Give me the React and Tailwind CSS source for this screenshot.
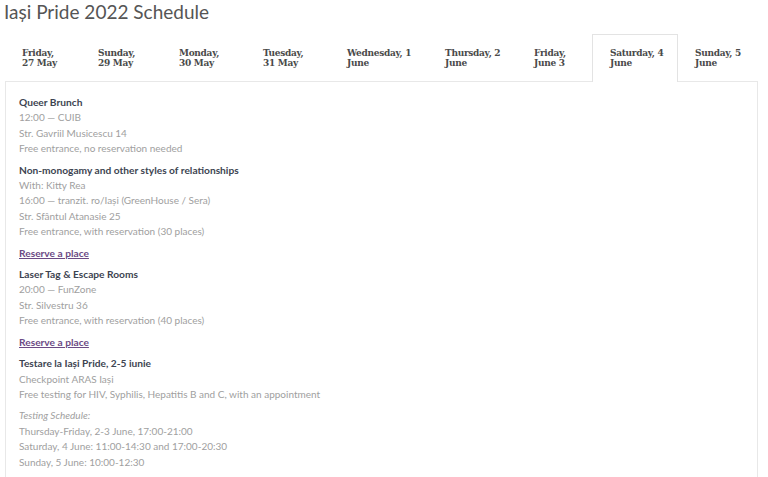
import React from 'react';

const tabs = [
    { l1: 'Friday,', l2: '27 May', w: 'w-[76px]' },
    { l1: 'Sunday,', l2: '29 May', w: 'w-[81px]' },
    { l1: 'Monday,', l2: '30 May', w: 'w-[84px]' },
    { l1: 'Tuesday,', l2: '31 May', w: 'w-[84px]' },
    { l1: 'Wednesday, 1', l2: 'June', w: 'w-[98px]' },
    { l1: 'Thursday, 2', l2: 'June', w: 'w-[89px]' },
    { l1: 'Friday,', l2: 'June 3', w: 'w-[75px]' },
    { l1: 'Saturday, 4', l2: 'June', w: 'w-[86px]', active: true },
    { l1: 'Sunday, 5', l2: 'June', w: 'w-[79px]' },
];

const Title = ({ children }) => (
    <div className="font-bold text-[#3d4451] text-[10.2px] leading-[15.4px]">{children}</div>
);

const Line = ({ children }) => (
    <div className="text-[#a0a0a0] text-[10px] leading-[15.4px]">{children}</div>
);

const Reserve = () => (
    <a href="#" className="font-bold text-[#6b4a85] underline text-[10.2px] leading-[15.4px] block">Reserve a place</a>
);

const App = () => {
    return (
        <div className="bg-white min-h-screen" style={{ fontFamily: 'Lato, "Open Sans", sans-serif' }}>
            <h1 className="pl-[4px] text-[19px] leading-[24px] text-[#555] font-normal">Iași Pride 2022 Schedule</h1>

            <div className="ml-[5px] mt-[10px] flex h-[47px] relative z-10" style={{ fontFamily: '"DejaVu Serif", serif' }}>
                {tabs.map((t) => (
                    <div
                        key={t.l1 + t.l2}
                        className={`${t.w} shrink-0 pl-[17px] flex items-center text-[9px] leading-[10px] font-bold text-[#4a4a4a] tracking-[-0.3px] ${t.active ? 'border border-b-0 border-[#e3e3e3] bg-white h-[48px] pb-[2px]' : ''}`}
                    >
                        <div>
                            <div>{t.l1}</div>
                            <div>{t.l2}</div>
                        </div>
                    </div>
                ))}
            </div>

            <div className="ml-[5px] w-[753px] border border-[#e8e8e8] px-[13px] pt-[13px] pb-4 flex flex-col gap-[6px]">
                <div>
                    <Title>Queer Brunch</Title>
                    <Line>12:00 — CUIB</Line>
                    <Line>Str. Gavriil Musicescu 14</Line>
                    <Line>Free entrance, no reservation needed</Line>
                </div>
                <div>
                    <Title>Non-monogamy and other styles of relationships</Title>
                    <Line>With: Kitty Rea</Line>
                    <Line>16:00 — tranzit. ro/Iași (GreenHouse / Sera)</Line>
                    <Line>Str. Sfântul Atanasie 25</Line>
                    <Line>Free entrance, with reservation (30 places)</Line>
                </div>
                <Reserve />
                <div>
                    <Title>Laser Tag &amp; Escape Rooms</Title>
                    <Line>20:00 — FunZone</Line>
                    <Line>Str. Silvestru 36</Line>
                    <Line>Free entrance, with reservation (40 places)</Line>
                </div>
                <Reserve />
                <div>
                    <Title>Testare la Iași Pride, 2-5 iunie</Title>
                    <Line>Checkpoint ARAS Iași</Line>
                    <Line>Free testing for HIV, Syphilis, Hepatitis B and C, with an appointment</Line>
                </div>
                <div>
                    <Line><em>Testing Schedule:</em></Line>
                    <Line>Thursday-Friday, 2-3 June, 17:00-21:00</Line>
                    <Line>Saturday, 4 June: 11:00-14:30 and 17:00-20:30</Line>
                    <Line>Sunday, 5 June: 10:00-12:30</Line>
                </div>
            </div>
        </div>
    );
};

export default App;
